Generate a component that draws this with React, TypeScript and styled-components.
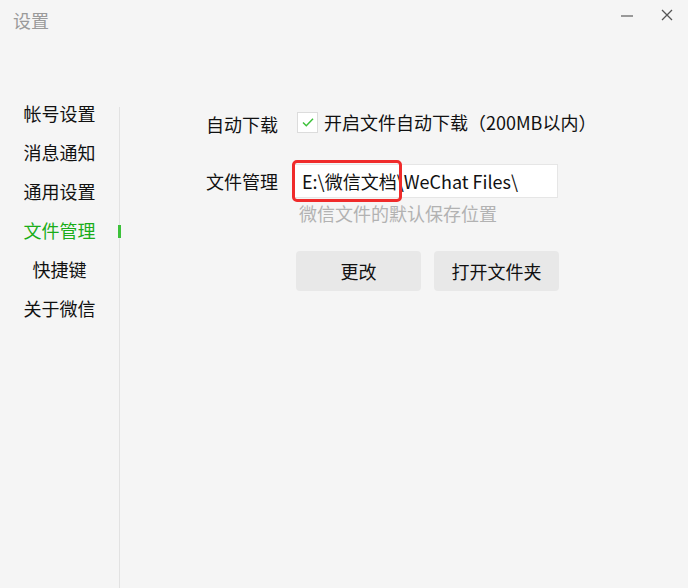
import React from 'react';
import styled, { createGlobalStyle } from 'styled-components';

const GlobalStyle = createGlobalStyle`
  body {
    margin: 0;
    background: #f5f5f5;
    font-family: "Microsoft YaHei", "Noto Sans CJK SC", "Noto Sans", sans-serif;
  }
`;

const Window = styled.div`
  width: 688px;
  height: 588px;
  display: flex;
  flex-direction: column;
  background: #f5f5f5;
  overflow: hidden;
`;

const TitleBar = styled.div`
  height: 40px;
  display: flex;
  align-items: center;
  justify-content: space-between;
  padding: 0 14px 0 13px;
  box-sizing: border-box;
`;

const Title = styled.div`
  font-size: 18px;
  color: #9a9a9a;
  margin-top: -1px;
`;

const Controls = styled.div`
  display: flex;
  align-items: center;
  gap: 26px;
  margin-top: -10px;
  color: #555;
`;

const Body = styled.div`
  flex: 1;
  display: flex;
`;

const Nav = styled.nav`
  width: 119px;
  padding-top: 54px;
  display: flex;
  flex-direction: column;
`;

const NavItem = styled.div<{ $active?: boolean }>`
  height: 39px;
  line-height: 39px;
  font-size: 18px;
  text-align: center;
  color: ${p => (p.$active ? '#1aad19' : '#111')};
`;

const Divider = styled.div`
  width: 1px;
  margin-top: 67px;
  background: #e2e2e2;
  position: relative;
`;

const Indicator = styled.div<{ $index: number }>`
  position: absolute;
  left: -1px;
  width: 3px;
  height: 13px;
  background: #3cc13a;
  top: ${p => 1 + p.$index * 39}px;
`;

const Content = styled.div`
  flex: 1;
  padding: 71px 0 0 86px;
  display: grid;
  grid-template-columns: 86px 1fr;
  align-content: start;
`;

const Label = styled.div`
  font-size: 18px;
  color: #111;
  display: flex;
  align-items: center;
`;

const CheckRow = styled.div`
  display: flex;
  align-items: center;
  gap: 6px;
  padding-left: 5px;
  height: 22px;
  font-size: 18px;
  color: #111;
`;

const CheckBox = styled.span`
  width: 21px;
  height: 21px;
  box-sizing: border-box;
  border: 1px solid #dcdcdc;
  background: #fff;
  display: inline-flex;
  align-items: center;
  justify-content: center;
`;

const Spacer = styled.div`
  grid-column: 1 / -1;
  height: 27px;
`;

const PathWrap = styled.div`
  position: relative;
  width: 266px;
`;

const PathInput = styled.div`
  height: 34px;
  box-sizing: border-box;
  border: 1px solid #e6e6e6;
  background: #fff;
  padding-left: 9px;
  font-size: 18px;
  line-height: 32px;
  color: #111;
  white-space: nowrap;
`;

const Highlight = styled.div`
  position: absolute;
  left: 0;
  top: -4px;
  width: 110px;
  height: 42px;
  box-sizing: border-box;
  border: 3px solid #f02b2b;
  border-radius: 5px;
`;

const Hint = styled.div`
  grid-column: 2;
  padding-left: 7px;
  margin-top: 3px;
  font-size: 18px;
  line-height: 24px;
  color: #b2b2b2;
`;

const Buttons = styled.div`
  grid-column: 2;
  display: flex;
  gap: 13px;
  margin: 26px 0 0 4px;
`;

const Button = styled.button`
  width: 125px;
  height: 40px;
  border: none;
  border-radius: 4px;
  background: #e8e8e8;
  font-family: inherit;
  font-size: 18px;
  color: #111;
  padding: 0;
`;

const navItems = ['帐号设置', '消息通知', '通用设置', '文件管理', '快捷键', '关于微信'];
const activeIndex = 3;

export default function App() {
  return (
    <>
      <GlobalStyle />
      <Window>
        <TitleBar>
          <Title>设置</Title>
          <Controls>
            <svg width="14" height="14" viewBox="0 0 14 14">
              <path d="M1 8h12" stroke="#666" strokeWidth="1.3" />
            </svg>
            <svg width="14" height="14" viewBox="0 0 14 14">
              <path d="M2 2l10 10M12 2L2 12" stroke="#555" strokeWidth="1.3" />
            </svg>
          </Controls>
        </TitleBar>
        <Body>
          <Nav>
            {navItems.map((item, i) => (
              <NavItem key={item} $active={i === activeIndex}>
                {item}
              </NavItem>
            ))}
          </Nav>
          <Divider>
            <Indicator $index={activeIndex} />
          </Divider>
          <Content>
            <Label>自动下载</Label>
            <CheckRow>
              <CheckBox>
                <svg width="14" height="14" viewBox="0 0 14 14">
                  <path d="M2 7.5l3.3 3.2L12 3.8" fill="none" stroke="#3cc13a" strokeWidth="1.5" />
                </svg>
              </CheckBox>
              开启文件自动下载（200MB以内）
            </CheckRow>
            <Spacer />
            <Label>文件管理</Label>
            <PathWrap>
              <PathInput>E:\微信文档\WeChat Files\</PathInput>
              <Highlight />
            </PathWrap>
            <Hint>微信文件的默认保存位置</Hint>
            <Buttons>
              <Button>更改</Button>
              <Button>打开文件夹</Button>
            </Buttons>
          </Content>
        </Body>
      </Window>
    </>
  );
}
